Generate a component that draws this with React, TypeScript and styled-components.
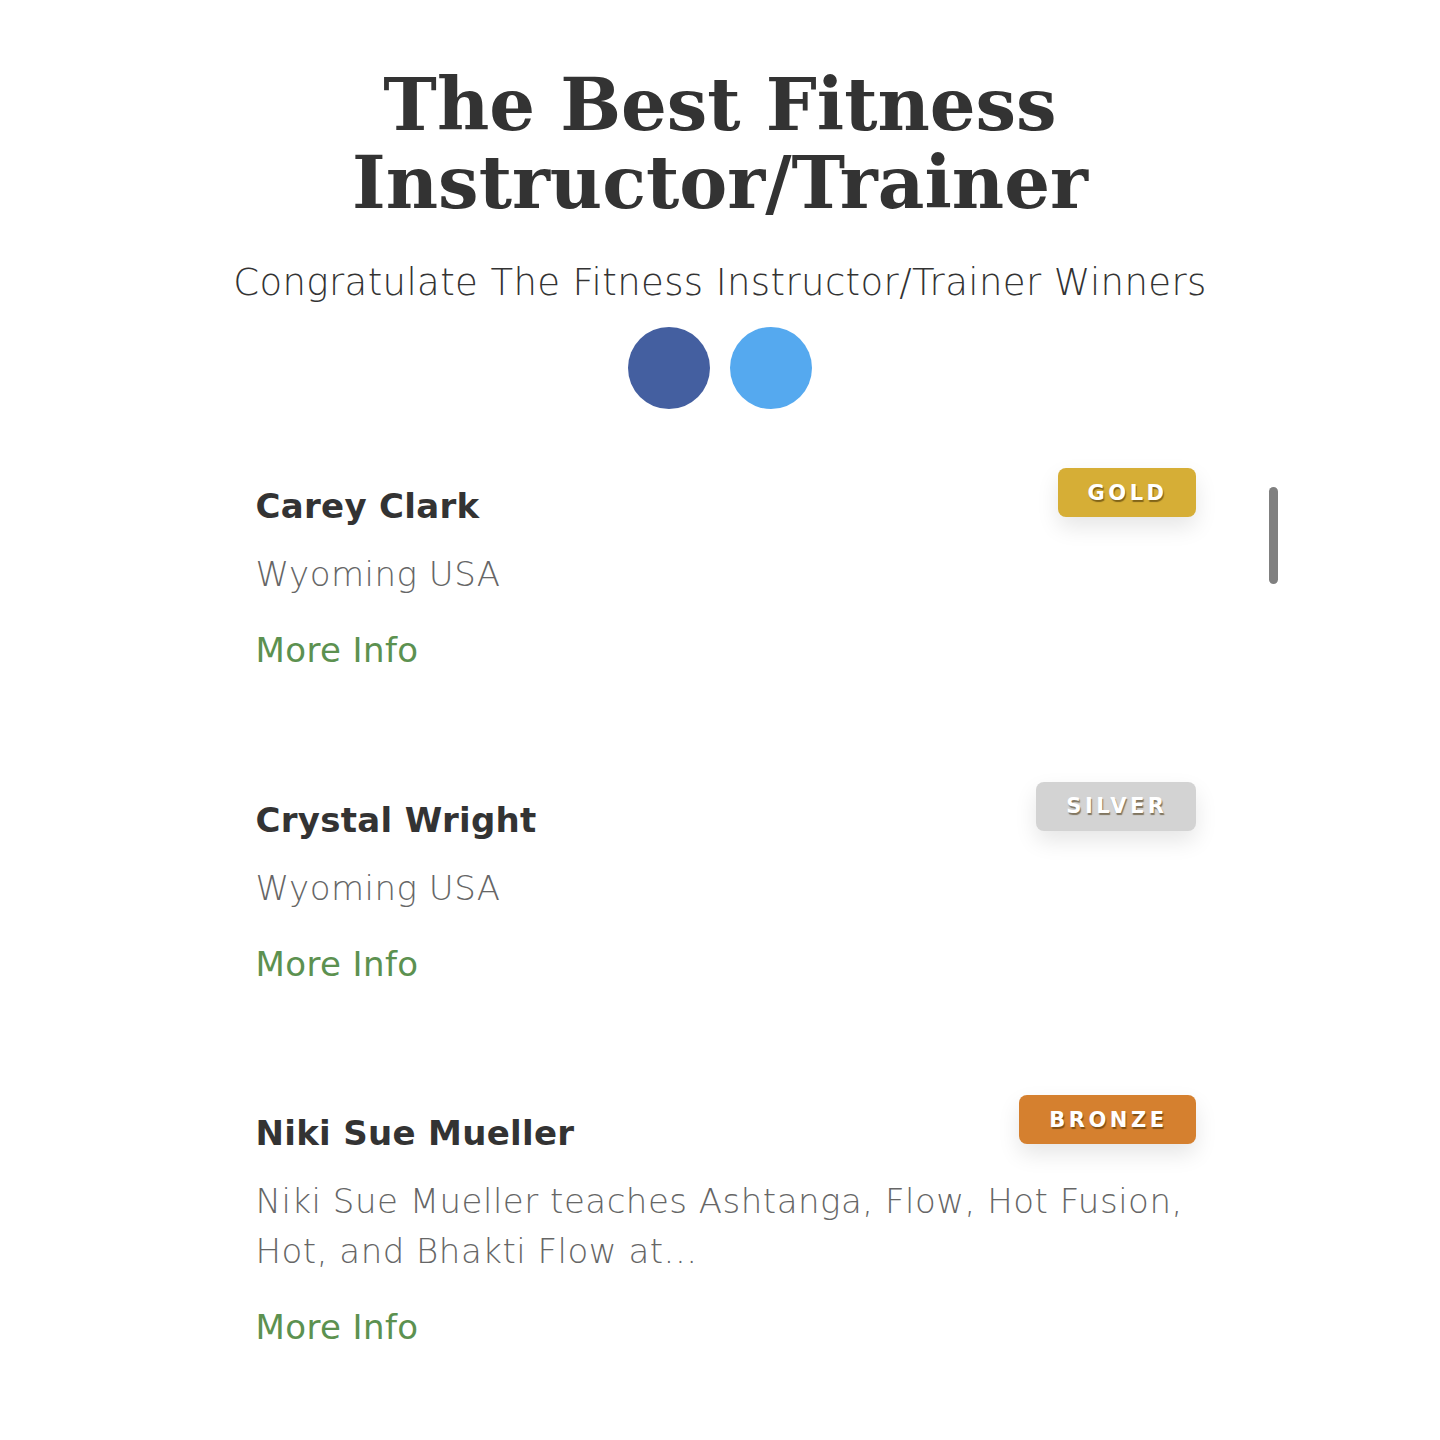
import React from 'react';
import styled, { createGlobalStyle } from 'styled-components';

const GlobalStyle = createGlobalStyle`
  html, body {
    margin: 0;
    padding: 0;
    background: #ffffff;
  }
  body {
    font-family: "DejaVu Sans", "Noto Sans", sans-serif;
  }
`;

const Page = styled.div`
  width: 1440px;
  min-height: 1440px;
  display: flex;
  flex-direction: column;
  align-items: center;
  padding-top: 66px;
  box-sizing: border-box;
`;

const Title = styled.h1`
  margin: 0;
  font-family: "DejaVu Serif", serif;
  font-weight: 700;
  font-size: 72px;
  line-height: 78px;
  color: #333333;
  text-align: center;
  letter-spacing: 0px;
`;

const Subtitle = styled.p`
  margin: 39px 0 0 0;
  font-family: "DejaVu Sans", sans-serif;
  font-weight: 200;
  font-size: 37px;
  letter-spacing: 0.4px;
  color: #333333;
  text-align: center;
`;

const Share = styled.div`
  display: flex;
  gap: 20px;
  margin-top: 23px;
`;

const Dot = styled.a<{ $color: string }>`
  display: block;
  width: 82px;
  height: 82px;
  border-radius: 50%;
  background: ${p => p.$color};
`;

const ListWrap = styled.div`
  position: relative;
  width: 940px;
  margin: 59px 0 0 11px;
`;

const ScrollThumb = styled.div`
  position: absolute;
  right: -82px;
  top: 19px;
  width: 9px;
  height: 97px;
  border-radius: 5px;
  background: #808080;
`;

const Card = styled.div`
  position: relative;
  height: 313.5px;
`;

const Info = styled.div`
  display: flex;
  flex-direction: column;
  align-items: flex-start;
  padding-top: 16px;
`;

const Name = styled.h2`
  margin: 0;
  font-family: "DejaVu Sans", sans-serif;
  font-weight: 700;
  font-size: 34px;
  line-height: 44px;
  letter-spacing: 0.3px;
  color: #333333;
`;

const Desc = styled.p`
  margin: 21px 0 0 0;
  max-width: 930px;
  font-family: "DejaVu Sans", sans-serif;
  font-weight: 200;
  font-size: 34px;
  line-height: 50px;
  letter-spacing: 0.5px;
  color: #666666;
`;

const MoreInfo = styled.a`
  margin-top: 29px;
  font-family: "DejaVu Sans", sans-serif;
  font-weight: 400;
  font-size: 34px;
  line-height: 44px;
  letter-spacing: 0.4px;
  color: #5c9150;
  text-decoration: none;
`;

const Badge = styled.span<{ $bg: string }>`
  position: absolute;
  top: 0;
  right: 0;
  height: 49px;
  padding: 0 28px 0 30px;
  display: flex;
  align-items: center;
  border-radius: 8px;
  background: ${p => p.$bg};
  box-shadow: 0 10px 22px rgba(0, 0, 0, 0.1);
  font-family: "DejaVu Sans", sans-serif;
  font-weight: 700;
  font-size: 21px;
  letter-spacing: 3.5px;
  color: #ffffff;
  text-shadow: 1px 2px 1px rgba(60, 40, 0, 0.55);
`;

const winners = [
  { name: 'Carey Clark', desc: 'Wyoming USA', medal: 'GOLD', color: '#d6ae36' },
  { name: 'Crystal Wright', desc: 'Wyoming USA', medal: 'SILVER', color: '#d3d3d3' },
  {
    name: 'Niki Sue Mueller',
    desc: 'Niki Sue Mueller teaches Ashtanga, Flow, Hot Fusion, Hot, and Bhakti Flow at...',
    medal: 'BRONZE',
    color: '#d5802f',
  },
];

export default function App() {
  return (
    <>
      <GlobalStyle />
      <Page>
        <Title>
          The Best Fitness
          <br />
          Instructor/Trainer
        </Title>
        <Subtitle>Congratulate The Fitness Instructor/Trainer Winners</Subtitle>
        <Share>
          <Dot $color="#445fa0" href="#" aria-label="Share on Facebook" />
          <Dot $color="#55a9ef" href="#" aria-label="Share on Twitter" />
        </Share>
        <ListWrap>
          <ScrollThumb />
          {winners.map(w => (
            <Card key={w.name}>
              <Info>
                <Name>{w.name}</Name>
                <Desc>{w.desc}</Desc>
                <MoreInfo href="#">More Info</MoreInfo>
              </Info>
              <Badge $bg={w.color}>{w.medal}</Badge>
            </Card>
          ))}
        </ListWrap>
      </Page>
    </>
  );
}
